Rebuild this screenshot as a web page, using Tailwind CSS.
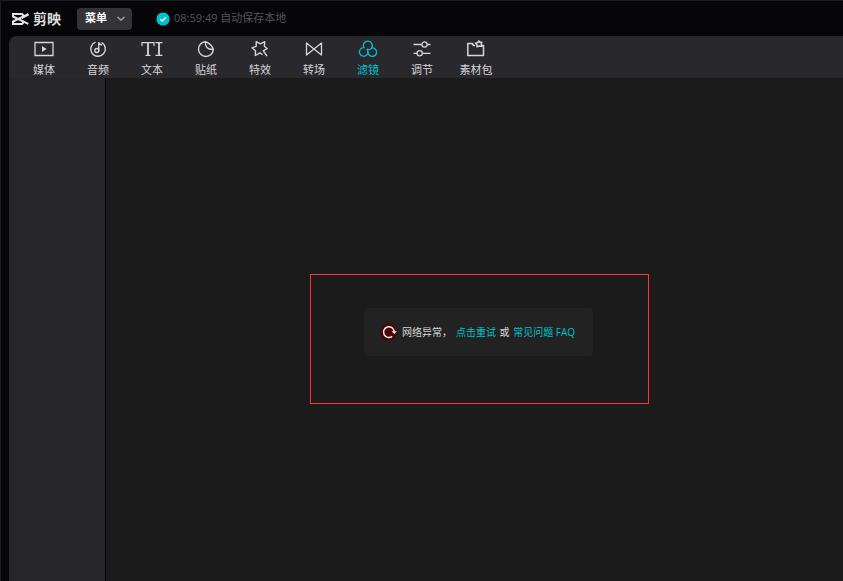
<!DOCTYPE html>
<html lang="zh-CN">
<head>
    <meta charset="UTF-8">
    <meta name="viewport" content="width=device-width, initial-scale=1.0">
    <title>剪映</title>
    <script src="https://cdn.jsdelivr.net/npm/@tailwindcss/browser@4"></script>
</head>
<body class="bg-[#060608] font-['Open_Sans','Noto_Sans_CJK_SC',sans-serif] text-[#d6d6d8]">
    <div class="flex min-h-screen flex-col border-t border-l border-[#1c1d20]">
        <!-- Title bar -->
        <header class="flex h-[35px] items-center pl-[10px]">
            <div class="flex items-center gap-1">
                <svg class="h-[14px] w-[18px]" viewBox="0 0 18 14" fill="none" stroke="#e4e4e4" stroke-width="2">
                    <path d="M17.300 2.500L12 5.400V3L11 2H2V4.500L17.300 11.800"/>
                    <path d="M17.300 2.200L2 9.500V12H11L12 11V8.800"/>
                </svg>
                <span class="text-[14px] leading-5 font-bold text-[#dcdcdc]">剪映</span>
            </div>
            <button class="ml-4 flex h-[22px] w-[55px] items-center justify-between rounded bg-[#343437] pr-[6px] pl-2 text-[11px] font-bold text-white">
                菜单
                <svg class="h-[10px] w-[10px]" viewBox="0 0 10 10" fill="none" stroke="#a3a3a6" stroke-width="1.500">
                    <path d="M1.500 3L5 6L8.500 3"/>
                </svg>
            </button>
            <div class="ml-6 flex items-center gap-1 text-[11px] text-[#545457]">
                <svg class="h-[14px] w-[14px]" viewBox="0 0 14 14">
                    <circle cx="7" cy="7" r="6.600" fill="#00c1cd"/>
                    <path d="M4.300 7.200l2 1.800 3.500-3.700" fill="none" stroke="#fff" stroke-width="1.300"/>
                </svg>
                <span>08:59:49 自动保存本地</span>
            </div>
        </header>

        <div class="ml-2 flex flex-1 flex-col overflow-hidden rounded-tl-lg bg-[#1b1b1b]">
            <!-- Toolbar -->
            <nav class="flex h-[42px] bg-[#29292d] pl-2 text-[11px] leading-4">
                <button class="flex w-[54px] flex-col items-center gap-[2px] pt-1">
                    <svg class="h-5 w-5" viewBox="0 0 20 20" fill="none" stroke="currentColor" stroke-width="1.300">
                        <path d="M1 2.500H19V15.500H1z"/>
                        <path d="M8 6L12.600 9L8 12z" fill="currentColor" stroke="none"/>
                    </svg>
                    <span>媒体</span>
                </button>
                <button class="flex w-[54px] flex-col items-center gap-[2px] pt-1">
                    <svg class="h-5 w-5" viewBox="0 0 20 20" fill="none" stroke="currentColor" stroke-width="1.400">
                        <path d="M7.500 2.100A7.300 7.300 0 1 0 13.500 2.500"/>
                        <circle cx="8.800" cy="10.500" r="2"/>
                        <path d="M10.800 10.500V2Q11 4.600 14 5"/>
                    </svg>
                    <span>音频</span>
                </button>
                <button class="flex w-[54px] flex-col items-center gap-[2px] pt-1">
                    <svg class="h-5 w-[22px]" viewBox="0 0 22 20" fill="none" stroke="currentColor" stroke-width="1.200">
                        <path d="M1 6V2.700H13V6M4.500 15.400H9.500M14.500 2.700H21.500M14.500 15.400H21.500"/>
                        <path d="M7 2.700V15.400M18 2.700V15.400" stroke-width="1.800"/>
                    </svg>
                    <span>文本</span>
                </button>
                <button class="flex w-[54px] flex-col items-center gap-[2px] pt-1">
                    <svg class="h-5 w-5" viewBox="0 0 20 20" fill="none" stroke="currentColor" stroke-width="1.400" stroke-linejoin="round">
                        <path d="M9.500 1.700A7.400 7.400 0 1 0 17.300 9.500Q16 4.500 9.500 1.700z"/>
                        <path d="M9.500 1.700C8.800 6.500 11.500 9.800 17.300 9.500"/>
                    </svg>
                    <span>贴纸</span>
                </button>
                <button class="flex w-[54px] flex-col items-center gap-[2px] pt-1">
                    <svg class="h-5 w-5" viewBox="0 0 20 20" fill="none" stroke="currentColor" stroke-width="1.400" stroke-linejoin="round">
                        <path d="M12.500 14.800L10 12.800L5.300 15.500L5.500 10.800L2 7.800L6.200 6.300L6.200 1.700L10.300 3.800L14.800 1.700L14.300 6.300L17.200 8.500L13.300 10.800L17 16"/>
                    </svg>
                    <span>特效</span>
                </button>
                <button class="flex w-[54px] flex-col items-center gap-[2px] pt-1">
                    <svg class="h-5 w-5" viewBox="0 0 20 20" fill="none" stroke="currentColor" stroke-width="1.300" stroke-linejoin="round">
                        <path d="M2.500 3V15L10 9zM17.500 3V15L10 9z"/>
                    </svg>
                    <span>转场</span>
                </button>
                <button class="flex w-[54px] flex-col items-center gap-[2px] pt-1 text-[#00c1cd]">
                    <svg class="h-5 w-5" viewBox="0 0 20 20" fill="none" stroke="currentColor" stroke-width="1.300">
                        <path d="M5.800 7.600A4.500 4.500 0 1 1 13.700 7.800C12.600 9.800 10.500 10 8.800 9"/>
                        <path d="M6.800 7.800A4.300 4.300 0 1 0 10 12.200C10 10.800 9.500 9.800 8.800 9"/>
                        <path d="M14 7.800A4.300 4.300 0 1 1 10 12.200"/>
                    </svg>
                    <span>滤镜</span>
                </button>
                <button class="flex w-[54px] flex-col items-center gap-[2px] pt-1">
                    <svg class="h-5 w-5" viewBox="0 0 20 20" fill="none" stroke="currentColor" stroke-width="1.300">
                        <path d="M1.500 4.500H9.800M15.200 4.500H18.500M1.500 13.300H5M10.400 13.300H18.500"/>
                        <circle cx="12.500" cy="4.500" r="2.600"/>
                        <circle cx="7.700" cy="13.300" r="2.600"/>
                    </svg>
                    <span>调节</span>
                </button>
                <button class="flex w-[54px] flex-col items-center gap-[2px] pt-1">
                    <svg class="h-5 w-5" viewBox="0 0 20 20" fill="none" stroke="currentColor" stroke-width="1.500" stroke-linejoin="round">
                        <path d="M9 5.500H7.500L6.300 3.500H1.800V15.500H17.500V5.500H16"/>
                        <path d="M12.800 1L13.800 2.300L15.800 2.300L15.200 4.300L16 6.300L13.500 6L11 6.800L10.900 4.800L9.500 3L11.700 2.800z"/>
                    </svg>
                    <span>素材包</span>
                </button>
            </nav>

            <div class="flex flex-1">
                <aside class="w-[97px] shrink-0 border-r border-[#060608] bg-[#262628]"></aside>

                <!-- Network error -->
                <main class="flex flex-1 items-center justify-center pt-[19px] pl-[10px]">
                    <div class="border border-[#ff352e] pt-[33px] pr-[55px] pb-[47px] pl-[53px]">
                        <div class="flex h-12 w-[229px] items-center rounded bg-[#222222] pl-4 text-[10px] whitespace-nowrap">
                            <svg class="mr-1 h-[18px] w-[18px]" viewBox="0 0 18 18">
                                <circle cx="9" cy="9" r="8.700" fill="#480709"/>
                                <path d="M12.200 13.400A5.400 5.400 0 1 1 14.300 8.500" fill="none" stroke="#f2e9e9" stroke-width="1.500"/>
                                <path d="M11.600 8.300H17L14.300 11z" fill="#f2e9e9"/>
                            </svg>
                            <p>网络异常，</p>
                            <p class="ml-1">
                                <a href="#" class="text-[#00c1cd]">点击重试</a>
                                <span class="mx-px">或</span>
                                <a href="#" class="text-[#00c1cd]">常见问题 FAQ</a>
                            </p>
                        </div>
                    </div>
                </main>
            </div>
        </div>
    </div>
</body>
</html>
